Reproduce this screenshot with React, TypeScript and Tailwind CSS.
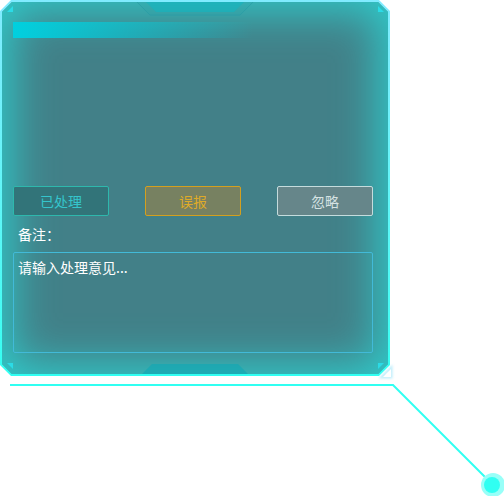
import { useState } from "react";

const actions = [
  { label: "已处理", style: "border-[#2eb8ad] bg-[#327479] text-[#35c5cc]" },
  { label: "误报", style: "border-[#d3a01f] bg-[#778161] text-[#deaa28]" },
  { label: "忽略", style: "border-[#c5dcdd] bg-[#66868a] text-[#d5e2e3]" },
];

function Frame() {
  return (
    <div aria-hidden="true" className="pointer-events-none absolute inset-0">
      <div className="absolute inset-0 bg-linear-to-b from-[#80ebff] to-[#30fff2] [clip-path:polygon(11px_0,calc(100%-11px)_0,100%_11px,100%_calc(100%-11px),calc(100%-11px)_100%,11px_100%,0_calc(100%-11px),0_11px)]">
        <div className="absolute inset-[2px] bg-[#428088] shadow-[inset_0_0_44px_9px_#2fcccc] [clip-path:polygon(10px_0,calc(100%-10px)_0,100%_10px,100%_calc(100%-10px),calc(100%-10px)_100%,10px_100%,0_calc(100%-10px),0_10px)]" />
      </div>
      <svg className="absolute top-[2px] left-1/2 -translate-x-1/2" width="118" height="15" viewBox="0 0 118 15">
        <path d="M0 0L14 14H104L118 0H107L99 9H19L11 0Z" fill="#239faa" fillOpacity=".16" />
        <path d="M10 0L20 10H98L108 0Z" fill="#14b4be" fillOpacity=".65" />
        <path d="M1 0L14 13H104L117 0" fill="none" stroke="#249aa5" strokeOpacity=".45" />
      </svg>
      <svg className="absolute bottom-[2px] left-1/2 -translate-x-1/2" width="106" height="10" viewBox="0 0 106 10">
        <path d="M0 10L10 0H96L106 10Z" fill="#14a8b4" fillOpacity=".7" />
      </svg>
      <svg className="absolute top-[6px] left-[7px]" width="6" height="6" viewBox="0 0 6 6">
        <path d="M6 0V6H0Z" fill="#2bdbe6" />
      </svg>
      <svg className="absolute top-[6px] right-[6px]" width="6" height="6" viewBox="0 0 6 6">
        <path d="M0 0V6H6Z" fill="#2bdbe6" />
      </svg>
      <svg className="absolute bottom-[7px] left-[7px]" width="6" height="6" viewBox="0 0 6 6">
        <path d="M0 0H6V6Z" fill="#2bdbe6" />
      </svg>
      <svg className="absolute right-[6px] bottom-[7px]" width="6" height="6" viewBox="0 0 6 6">
        <path d="M0 6V0H6Z" fill="#2bdbe6" />
      </svg>
      <svg className="absolute -right-1 -bottom-1 overflow-visible" width="14" height="14" viewBox="0 0 14 14">
        <path d="M11 2V11H2Z" fill="#fff" stroke="#c0eefb" strokeWidth="3" className="blur-[1px]" />
        <path d="M11 3V11H3Z" fill="#fff" />
      </svg>
    </div>
  );
}

export default function App() {
  const [note, setNote] = useState("");
  return (
    <main className="w-full max-w-[504px] overflow-hidden bg-white font-['Noto_Sans_CJK_SC',sans-serif] text-sm leading-5">
      <section className="relative isolate w-full max-w-[390px] pt-[22px] pr-[17px] pb-[23px] pl-[13px]">
        <Frame />
        <div className="relative">
          <div className="h-4 w-60 bg-linear-to-r from-[#00d0df] to-[#428088]/0" />
          <div className="h-[148px]" />
          <div className="flex justify-between">
            {actions.map((action) => (
              <button
                key={action.label}
                type="button"
                className={`h-[30px] w-24 rounded-xs border ${action.style}`}
              >
                {action.label}
              </button>
            ))}
          </div>
          <label htmlFor="note" className="mt-2 block pb-2 pl-[5px] text-white">
            备注：
          </label>
          <textarea
            id="note"
            value={note}
            onChange={(event) => setNote(event.target.value)}
            placeholder="请输入处理意见..."
            className="block h-[101px] w-full resize-none rounded-xs border border-[#42bad8] bg-transparent p-1 text-white outline-none placeholder:text-white"
          />
        </div>
      </section>
      <svg aria-hidden="true" className="block w-full" viewBox="0 0 504 120">
        <path d="M10 9H393L492 108" fill="none" stroke="#30fff2" strokeWidth="2" />
        <circle cx="493" cy="109" r="12" fill="#98fff8" />
        <circle cx="492" cy="109" r="8" fill="#30fff2" />
      </svg>
    </main>
  );
}
